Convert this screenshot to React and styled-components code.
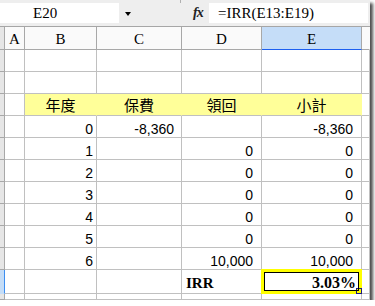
import React from 'react';
import styled, { createGlobalStyle } from 'styled-components';

const GlobalStyle = createGlobalStyle`
  html, body {
    margin: 0;
    padding: 0;
    background: #ffffff;
  }
`;

const grid = '#c0c0c0';

const Frame = styled.div`
  width: 370px;
  height: 300px;
  background: #ffffff;
  box-shadow: 3px 3px 3px rgba(0, 0, 0, 0.7);
  overflow: hidden;
  display: flex;
  flex-direction: column;
`;

const FormulaBar = styled.div`
  height: 26px;
  flex: none;
  display: flex;
  align-items: center;
  background: #eeeeee;
  border-bottom: 1px solid #a6a6a6;
`;

const NameBox = styled.div`
  width: 119px;
  height: 20px;
  background: #ffffff;
  padding-left: 33px;
  box-sizing: border-box;
  font-family: "Liberation Serif", serif;
  font-size: 15px;
  line-height: 21px;
  color: #000;
`;

const DropArrow = styled.div`
  margin-left: 6px;
  width: 0;
  height: 0;
  border-left: 3.5px solid transparent;
  border-right: 3.5px solid transparent;
  border-top: 4px solid #000;
  margin-top: 2px;
`;

const Divider = styled.div`
  align-self: flex-start;
  margin-left: 49px;
  width: 1px;
  height: 3px;
  background: #b0b0b0;
`;

const FxLabel = styled.div`
  margin-left: 12px;
  width: 16px;
  font-family: "Liberation Serif", serif;
  font-style: italic;
  font-weight: bold;
  font-size: 14px;
  letter-spacing: -1px;
  color: #222;
`;

const FormulaInput = styled.div`
  width: 159px;
  height: 20px;
  background: #ffffff;
  padding-left: 9px;
  box-sizing: border-box;
  font-family: "Liberation Serif", serif;
  font-size: 15px;
  line-height: 21px;
  color: #000;
`;

const Sheet = styled.div`
  display: grid;
  grid-template-columns: 5px 20px 72px 85px 80px 100px 8px;
  grid-template-rows: 23px repeat(10, 22px) 24px 6px;
`;

const Cell = styled.div`
  position: relative;
  box-sizing: border-box;
  display: flex;
  align-items: flex-end;
  justify-content: ${p => p.$align === 'right' ? 'flex-end' : p.$align === 'center' ? 'center' : 'flex-start'};
  padding: 0 ${p => p.$padRight ?? 3}px 0 ${p => p.$padLeft ?? 3}px;
  border-right: 1px solid ${p => p.$fill ? p.$fill : grid};
  border-bottom: 1px solid ${grid};
  background: ${p => p.$fill || '#ffffff'};
  font-family: "Liberation Sans", Arial, sans-serif;
  font-size: 14px;
  line-height: 16px;
  color: #000;
  white-space: nowrap;
`;

const HeadingText = styled.span`
  font-family: "Noto Sans CJK TC", "Noto Sans CJK SC", sans-serif;
  font-size: 15px;
  line-height: 21px;
`;

const BoldText = styled.span`
  font-family: "Liberation Serif", serif;
  font-weight: bold;
  font-size: ${p => p.$size || 15}px;
  line-height: 18px;
  padding-bottom: 1px;
`;

const RowHead = styled.div`
  box-sizing: border-box;
  background: ${p => p.$active ? '#c5ddf7' : '#e6e6e6'};
  border-right: 1px solid ${p => p.$active ? '#3d8ef0' : '#a8a8a8'};
  border-bottom: 1px solid ${p => p.$active ? '#c5ddf7' : '#a8a8a8'};
`;

const ColHead = styled.div`
  box-sizing: border-box;
  display: flex;
  align-items: center;
  justify-content: center;
  background: ${p => p.$active ? '#c5ddf8' : '#fafafa'};
  border-right: 1px solid ${p => p.$last ? 'transparent' : '#a8a8a8'};
  border-bottom: 1px solid ${p => p.$active ? '#1d5ff0' : '#a8a8a8'};
  font-family: "Liberation Serif", serif;
  font-size: 15px;
  line-height: 18px;
  padding-top: 2px;
  color: #000;
`;

const Selection = styled.div`
  position: absolute;
  left: -1px;
  top: -1px;
  right: -1px;
  bottom: -1px;
  border: 3px solid #ffff00;
  pointer-events: none;
  &::after {
    content: '';
    position: absolute;
    inset: 0;
    border: 1px solid #000;
  }
`;

const FillHandle = styled.div`
  position: absolute;
  right: -3px;
  bottom: -3px;
  width: 4px;
  height: 4px;
  background: #ffff00;
  border: 1px solid #1a1a80;
`;

const yellow = '#ffff99';

const rows = [
  { b: '', c: '', d: '', e: '' },
  { b: '', c: '', d: '', e: '' },
  { header: true, b: '年度', c: '保費', d: '領回', e: '小計' },
  { b: '0', c: '-8,360', d: '', e: '-8,360' },
  { b: '1', c: '', d: '0', e: '0' },
  { b: '2', c: '', d: '0', e: '0' },
  { b: '3', c: '', d: '0', e: '0' },
  { b: '4', c: '', d: '0', e: '0' },
  { b: '5', c: '', d: '0', e: '0' },
  { b: '6', c: '', d: '10,000', e: '10,000' },
];

const columns = ['A', 'B', 'C', 'D', 'E'];

export default function App() {
  return (
    <>
      <GlobalStyle />
      <Frame>
        <FormulaBar>
          <NameBox>E20</NameBox>
          <DropArrow />
          <Divider />
          <FxLabel>fx</FxLabel>
          <FormulaInput>=IRR(E13:E19)</FormulaInput>
        </FormulaBar>
        <Sheet>
          <RowHead />
          {columns.map(c => (
            <ColHead key={c} $active={c === 'E'}>{c}</ColHead>
          ))}
          <ColHead $last />

          {rows.map((r, i) => r.header ? (
            <React.Fragment key={i}>
              <RowHead />
              <Cell />
              <Cell $fill={yellow} $align="center"><HeadingText>{r.b}</HeadingText></Cell>
              <Cell $fill={yellow} $align="center"><HeadingText>{r.c}</HeadingText></Cell>
              <Cell $fill={yellow} $align="center"><HeadingText>{r.d}</HeadingText></Cell>
              <Cell $fill={yellow} $align="center"><HeadingText>{r.e}</HeadingText></Cell>
              <Cell />
            </React.Fragment>
          ) : (
            <React.Fragment key={i}>
              <RowHead />
              <Cell />
              <Cell $align="right">{r.b}</Cell>
              <Cell $align="right" $padRight={7}>{r.c}</Cell>
              <Cell $align="right" $padRight={8}>{r.d}</Cell>
              <Cell $align="right" $padRight={8}>{r.e}</Cell>
              <Cell />
            </React.Fragment>
          ))}

          <RowHead $active />
          <Cell />
          <Cell />
          <Cell />
          <Cell $padLeft={4}><BoldText $size={15}>IRR</BoldText></Cell>
          <Cell $align="right" $padRight={5}>
            <BoldText $size={16}>3.03%</BoldText>
            <Selection>
              <FillHandle />
            </Selection>
          </Cell>
          <Cell />

          <RowHead />
          <Cell />
          <Cell />
          <Cell />
          <Cell />
          <Cell />
          <Cell />
        </Sheet>
      </Frame>
    </>
  );
}
